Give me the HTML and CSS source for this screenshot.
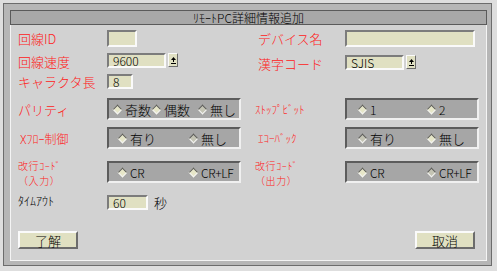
FILE: index.html
```html
<!DOCTYPE html>
<html lang="ja">
<head>
<meta charset="UTF-8">
<title>ﾘﾓｰﾄPC詳細情報追加</title>
<link rel="stylesheet" href="styles.css">
</head>
<body>

<div class="frame">
    <div class="title">ﾘﾓｰﾄPC詳細情報追加</div>
    <div class="panel">
        <div class="form">
            <!-- row 1 -->
            <div class="lbl h17">回線ID</div>
            <div><span class="field w30 h17"></span></div>
            <div class="lbl h17 ind">デバイス名</div>
            <div><span class="field w130 h17"></span></div>

            <!-- row 2 -->
            <div class="lbl h17">回線速度</div>
            <div class="combo">
                <span class="field w59 h15">9600</span>
                <span class="arrow"><svg width="7" height="9" viewBox="0 0 7 9"><path d="M3.5 1 L6 4 L1 4 Z" fill="#000"/><rect x="3" y="3" width="1" height="3" fill="#000"/><rect x="1" y="7" width="5" height="1" fill="#000"/></svg></span>
            </div>
            <div class="lbl h17 ind down">漢字コード</div>
            <div class="combo down">
                <span class="field w59 h15">SJIS</span>
                <span class="arrow"><svg width="7" height="9" viewBox="0 0 7 9"><path d="M3.5 1 L6 4 L1 4 Z" fill="#000"/><rect x="3" y="3" width="1" height="3" fill="#000"/><rect x="1" y="7" width="5" height="1" fill="#000"/></svg></span>
            </div>

            <!-- row 3 -->
            <div class="lbl h15">キャラクタ長</div>
            <div><span class="field w26 h15">8</span></div>
            <div></div>
            <div></div>

            <!-- row 4 -->
            <div class="lbl h22">パリティ</div>
            <div class="group three">
                <span class="opt o1"><i class="dia"></i>奇数</span>
                <span class="opt o2"><i class="dia"></i>偶数</span>
                <span class="opt"><i class="dia off"></i>無し</span>
            </div>
            <div class="lbl h22 narrow">ｽﾄｯﾌﾟﾋﾞｯﾄ</div>
            <div class="group right">
                <span class="opt latin"><i class="dia"></i>1</span>
                <span class="opt latin"><i class="dia"></i>2</span>
            </div>

            <!-- row 5 -->
            <div class="lbl h22 ind2 mixed">Xﾌﾛｰ制御</div>
            <div class="group">
                <span class="opt"><i class="dia"></i>有り</span>
                <span class="opt"><i class="dia off"></i>無し</span>
            </div>
            <div class="lbl h22 ind narrow">ｴｺｰﾊﾞｯｸ</div>
            <div class="group right">
                <span class="opt"><i class="dia off"></i>有り</span>
                <span class="opt"><i class="dia"></i>無し</span>
            </div>

            <!-- row 6 -->
            <div class="lbl two"><span>改行ｺｰﾄﾞ</span><span>（入力）</span></div>
            <div class="group">
                <span class="opt latin"><i class="dia"></i>CR</span>
                <span class="opt latin"><i class="dia"></i>CR+LF</span>
            </div>
            <div class="lbl two"><span>改行ｺｰﾄﾞ</span><span>（出力）</span></div>
            <div class="group right">
                <span class="opt latin"><i class="dia"></i>CR</span>
                <span class="opt latin"><i class="dia off"></i>CR+LF</span>
            </div>

            <!-- row 7 -->
            <div class="lbl h15 black">ﾀｲﾑｱｳﾄ</div>
            <div class="timeout"><span class="field w41 h15">60</span><span class="unit">秒</span></div>
            <div></div>
            <div></div>

            <!-- row 8 -->
            <div><button class="btn" type="button">了解</button></div>
            <div></div>
            <div></div>
            <div class="btn-end"><button class="btn" type="button">取消</button></div>
        </div>
    </div>
</div>

</body>
</html>
```

FILE: styles.css
```css
body {
    margin: 0;
    background-color: #dedede;
    font-family: "Noto Sans CJK JP", "Liberation Sans", sans-serif;
}
.frame {
    margin: 3px 0 0 3px;
    width: 489px;
    height: 263px;
    box-sizing: border-box;
    border: 1px solid #6c6c6c;
    background-color: #b6b6b6;
    padding: 6px 4px 4px 6px;
}
.title {
    height: 15px;
    box-sizing: border-box;
    border: 1px solid #5a5a5a;
    background-color: #a8a8a8;
    font-size: 12px;
    font-weight: 300;
    line-height: 13px;
    text-align: center;
    color: #000;
}
.panel {
    height: 236px;
    box-sizing: border-box;
    border: 1px solid #f4f4f4;
    border-top: none;
    background-color: #d2d2d2;
    padding: 5px 0 0 7px;
}
.form {
    display: grid;
    grid-template-columns: 89px 148px 90px 134px;
    grid-template-rows: 23px 21px 24px 29px 34px 32px 38px 18px;
    align-items: start;
}
.lbl {
    display: flex;
    align-items: center;
    color: #ff2020;
    font-size: 13px;
    font-weight: 300;
    white-space: nowrap;
}
.lbl.ind { padding-left: 3px; }
.lbl.ind2 { padding-left: 2px; }
.lbl.down { margin-top: 2px; }
.lbl.narrow { font-size: 11px; }
.lbl.mixed { font-size: 12px; }
.lbl.two {
    flex-direction: column;
    align-items: flex-start;
    margin-top: -3px;
    font-size: 10px;
    line-height: 15px;
    letter-spacing: 0.6px;
}
.lbl.black {
    color: #000;
    font-size: 12px;
}
.h15 { height: 15px; }
.h17 { height: 17px; }
.h22 { height: 22px; }

.field {
    display: block;
    box-sizing: border-box;
    background-color: #e0e0c2;
    border: 2px solid;
    border-color: #7c7c7c #fafafa #fafafa #7c7c7c;
    font-size: 12px;
    font-weight: 300;
    line-height: 11px;
    padding-left: 4px;
    color: #000;
}
.w26 { width: 26px; }
.w30 { width: 30px; }
.w41 { width: 41px; }
.w59 { width: 59px; }
.w130 { width: 130px; }
.h15.field { height: 15px; }
.h17.field { height: 17px; }

.combo {
    display: flex;
    align-items: flex-start;
    gap: 2px;
}
.combo.down { margin-top: 2px; }
.arrow {
    display: flex;
    align-items: center;
    justify-content: center;
    width: 10px;
    height: 14px;
    box-sizing: border-box;
    background-color: #e0e0c2;
    border: 1px solid;
    border-color: #fafafa #6c6c6c #6c6c6c #fafafa;
}

.group {
    display: flex;
    align-items: center;
    width: 134px;
    height: 22px;
    box-sizing: border-box;
    background-color: #a6a6a6;
    border: 2px solid;
    border-color: #5c5c5c #f0f0f0 #f0f0f0 #5c5c5c;
    padding-left: 9px;
}
.group.right { padding-left: 11px; }
.group.three { padding-left: 4px; }
.opt {
    display: flex;
    align-items: center;
    width: 71px;
    font-size: 13px;
    font-weight: 300;
    color: #000;
    white-space: nowrap;
}
.group.right .opt { width: 69px; }
.group.three .o1 { width: 39px; }
.group.three .o2 { width: 46px; }
.group .opt:last-child { width: auto; }
.opt.latin {
    font-size: 12px;
    letter-spacing: -0.3px;
}
.dia {
    display: inline-block;
    width: 5px;
    height: 5px;
    margin: 0 4px 0 1px;
    transform: rotate(45deg);
    background-color: #e6e6c8;
    border: 1px solid;
    border-color: #5a5a5a #f4f4f4 #f4f4f4 #5a5a5a;
}
.dia.off {
    background-color: #c4c4b4;
}

.timeout {
    display: flex;
    align-items: center;
}
.unit {
    margin-left: 6px;
    font-size: 13px;
    font-weight: 300;
    color: #000;
}

.btn {
    display: block;
    width: 60px;
    height: 18px;
    padding: 0;
    box-sizing: border-box;
    background-color: #e0e0c2;
    border: 2px solid;
    border-color: #fafafa #6c6c6c #6c6c6c #fafafa;
    font-family: "Noto Sans CJK JP", sans-serif;
    font-size: 13px;
    font-weight: 300;
    line-height: 13px;
    color: #000;
}
.btn-end {
    display: flex;
    justify-content: flex-end;
    padding-right: 4px;
}
```
